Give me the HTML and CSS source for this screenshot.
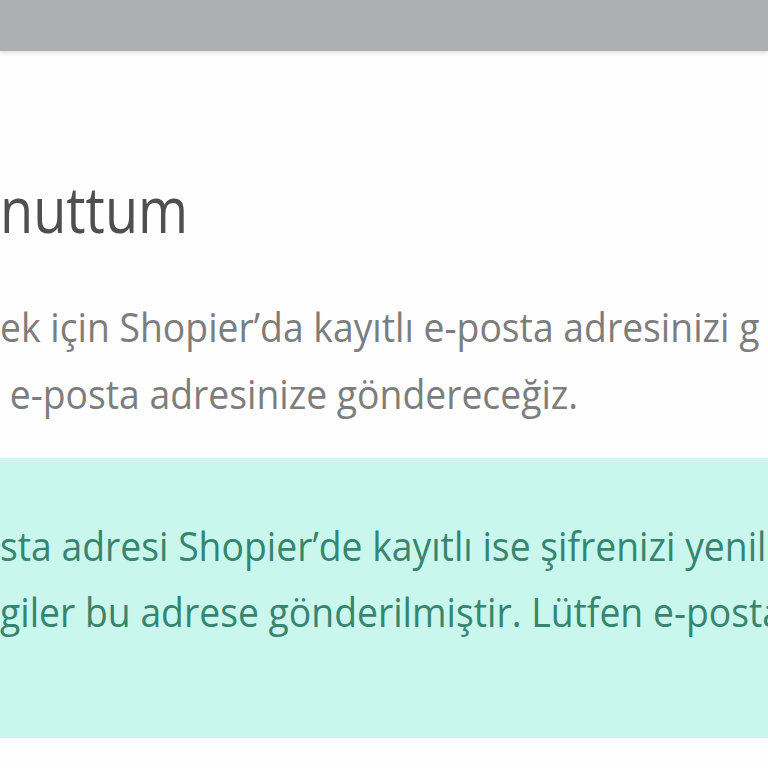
FILE: index.html
```html
<!DOCTYPE html>
<html lang="tr">
<head>
<meta charset="utf-8">
<title>Şifremi unuttum</title>
<link rel="stylesheet" href="styles.css">
</head>
<body>
  <header class="topbar"></header>
  <main class="content">
    <h1 class="title"><span class="squash squash-title">nuttum</span></h1>
    <p class="desc">
      <span class="line squash">ek için Shopier’da kayıtlı e-posta adresinizi g</span>
      <span class="line squash">&nbsp;e-posta adresinize göndereceğiz.</span>
    </p>
    <div class="alert">
      <p class="alert-text">
        <span class="line squash">sta adresi Shopier’de kayıtlı ise şifrenizi yenil</span>
        <span class="line squash">giler bu adrese gönderilmiştir. Lütfen e-posta</span>
      </p>
    </div>
  </main>
</body>
</html>
```

FILE: styles.css
```css
html, body {
  margin: 0;
  padding: 0;
  background: #fefefe;
  overflow: hidden;
}
body {
  width: 768px;
  height: 768px;
  font-family: "Open Sans", "Noto Sans", sans-serif;
}
.topbar {
  height: 51px;
  background: #aeafb1;
  box-shadow: 0 2px 4px rgba(0, 0, 0, 0.12);
}
.content {
  overflow: hidden;
}
.squash {
  display: inline-block;
  white-space: nowrap;
  transform: scaleX(0.91);
  transform-origin: left center;
}
.squash-title {
  transform: scaleX(0.845);
}
.title {
  margin: 118px 0 0 0;
  font-size: 64px;
  font-weight: 400;
  line-height: 80px;
  color: #4f4f4f;
}
.desc {
  margin: 44px 0 0 0;
  font-size: 41px;
  line-height: 67px;
  color: #7d7d7d;
}
.line {
  display: block;
  width: max-content;
}
.alert {
  margin-top: 31px;
  height: 280px;
  background: #c9f7ee;
  box-sizing: border-box;
  padding-top: 54px;
}
.alert-text {
  margin: 0;
  font-size: 41px;
  line-height: 66px;
  color: #37846f;
}
```
